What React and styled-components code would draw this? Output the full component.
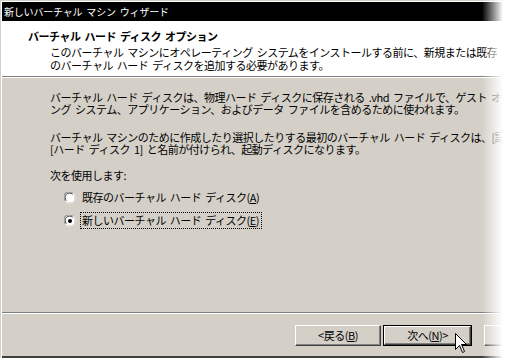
import React from "react";
import styled, { createGlobalStyle } from "styled-components";

const Global = createGlobalStyle`
  html, body { margin: 0; padding: 0; background: #ffffff; overflow: hidden; }
  body { width: 508px; height: 358px; position: relative; }
  #root { width: 508px; height: 358px; }
  * { box-sizing: border-box; }
`;

const font = `"Noto Sans CJK JP", "MS UI Gothic", sans-serif`;

const Window = styled.div`
  position: relative;
  width: 540px;
  height: 358px;
  background: #d4d0c8;
  border-top: 1px solid #d4d0c8;
  border-left: 1px solid #d4d0c8;
  box-shadow: inset 1px 1px 0 #ffffff;
  display: flex;
  flex-direction: column;
  font-family: ${font};
  font-size: 11px;
  letter-spacing: -0.5px;
  word-spacing: 2px;
  color: #000;
  padding: 1px 0 0 1px;
`;

const TitleBar = styled.div`
  height: 19px;
  background: #000;
  color: #fff;
  font-size: 10px;
  letter-spacing: -0.2px;
  line-height: 19px;
  padding-left: 2px;
  white-space: nowrap;
  flex: none;
`;

const Header = styled.div`
  background: #fff;
  height: 56px;
  flex: none;
  padding: 9px 0 0 26px;
  border-bottom: 1px solid #808080;
  box-shadow: 0 1px 0 #ffffff;
  margin-bottom: 1px;
  white-space: nowrap;
`;

const HeaderTitle = styled.div`
  font-weight: bold;
  line-height: 13px;
`;

const HeaderSub = styled.div`
  margin-top: 3px;
  padding-left: 22px;
  line-height: 13px;
`;

const Body = styled.div`
  flex: 1;
  padding: 13px 0 0 48px;
  white-space: nowrap;
  border-bottom: 1px solid #808080;
  box-shadow: 0 1px 0 #ffffff;
`;

const Para = styled.p`
  margin: 0 0 ${(p) => p.$gap ?? 16}px 0;
  line-height: 12px;
`;

const RadioGroup = styled.div`
  display: flex;
  flex-direction: column;
  margin-top: 5px;
  padding-left: 14px;
`;

const RadioRow = styled.label`
  display: flex;
  align-items: center;
  height: 23px;
  gap: 4px;
`;

const RadioText = styled.span`
  line-height: 13px;
  padding: 1px 2px 1px 1px;
  border: 1px dotted ${(p) => (p.$focus ? "#000" : "transparent")};
`;

const Footer = styled.div`
  height: 44px;
  flex: none;
  margin-top: 1px;
  display: flex;
  align-items: flex-start;
  padding: 11px 0 0 293px;
  gap: 2px;
  border-bottom: 2px solid #404040;
`;

const Button = styled.div`
  width: ${(p) => p.$w}px;
  height: 21px;
  background: #d4d0c8;
  border: ${(p) => (p.$default ? "1px solid #000" : "none")};
  margin-left: ${(p) => p.$ml || 0}px;
  flex: none;
  display: flex;
`;

const ButtonFace = styled.div`
  flex: 1;
  display: flex;
  align-items: center;
  justify-content: center;
  border-top: 1px solid #fff;
  border-left: 1px solid #fff;
  border-right: 1px solid #404040;
  border-bottom: 1px solid #404040;
  box-shadow: inset -1px -1px 0 #808080;
  line-height: 13px;
`;

const Under = styled.span`
  text-decoration: underline;
`;

const Fade = styled.div`
  position: absolute;
  top: 0;
  left: 482px;
  width: 26px;
  height: 358px;
  background: linear-gradient(to right, rgba(255,255,255,0) 0%, #ffffff 80%);
  pointer-events: none;
`;

const CursorWrap = styled.div`
  position: absolute;
  left: 455px;
  top: 333px;
  width: 14px;
  height: 22px;
`;

function Radio({ checked }) {
  return (
    <svg width="12" height="12" viewBox="0 0 12 12" style={{ flex: "none" }}>
      <circle cx="6" cy="6" r="5.5" fill="#fff" />
      <path d="M1.2 8.8 A5.3 5.3 0 0 1 8.8 1.2" fill="none" stroke="#808080" strokeWidth="1" />
      <path d="M2.4 8.6 A4.3 4.3 0 0 1 8.6 2.4" fill="none" stroke="#404040" strokeWidth="1" />
      <path d="M3.4 9.6 A4.3 4.3 0 0 0 9.6 3.4" fill="none" stroke="#d4d0c8" strokeWidth="1" />
      {checked && <circle cx="6" cy="6" r="2" fill="#000" />}
    </svg>
  );
}

function Cursor() {
  return (
    <svg width="14" height="22" viewBox="0 0 14 22">
      <path
        d="M0.5 0.5 L0.5 16.5 L4.5 12.5 L7.5 19.5 L9.5 18.5 L6.5 11.5 L11.5 11.5 Z"
        fill="#fff"
        stroke="#000"
        strokeWidth="1"
        strokeLinejoin="miter"
      />
    </svg>
  );
}

export default function App() {
  return (
    <>
      <Global />
      <Window>
        <TitleBar>新しいバーチャル マシン ウィザード</TitleBar>
        <Header>
          <HeaderTitle>バーチャル ハード ディスク オプション</HeaderTitle>
          <HeaderSub>
            このバーチャル マシンにオペレーティング システムをインストールする前に、新規または既存
            <br />
            のバーチャル ハード ディスクを追加する必要があります。
          </HeaderSub>
        </Header>
        <Body>
          <Para>
            バーチャル ハード ディスクは、物理ハード ディスクに保存される .vhd ファイルで、ゲスト オペレーティ
            <br />
            ング システム、アプリケーション、およびデータ ファイルを含めるために使われます。
          </Para>
          <Para $gap={14}>
            バーチャル マシンのために作成したり選択したりする最初のバーチャル ハード ディスクは、[記
            <br />
            [ハード ディスク 1] と名前が付けられ、起動ディスクになります。
          </Para>
          <Para $gap={0}>次を使用します:</Para>
          <RadioGroup>
            <RadioRow>
              <Radio />
              <RadioText>
                既存のバーチャル ハード ディスク(<Under>A</Under>)
              </RadioText>
            </RadioRow>
            <RadioRow>
              <Radio checked />
              <RadioText $focus>
                新しいバーチャル ハード ディスク(<Under>E</Under>)
              </RadioText>
            </RadioRow>
          </RadioGroup>
        </Body>
        <Footer>
          <Button $w={86}>
            <ButtonFace>
              &lt;戻る(<Under>B</Under>)
            </ButtonFace>
          </Button>
          <Button $w={89} $default>
            <ButtonFace>
              次へ(<Under>N</Under>)&gt;
            </ButtonFace>
          </Button>
          <Button $w={86} $ml={10}>
            <ButtonFace />
          </Button>
        </Footer>
      </Window>
      <Fade />
      <CursorWrap>
        <Cursor />
      </CursorWrap>
    </>
  );
}
